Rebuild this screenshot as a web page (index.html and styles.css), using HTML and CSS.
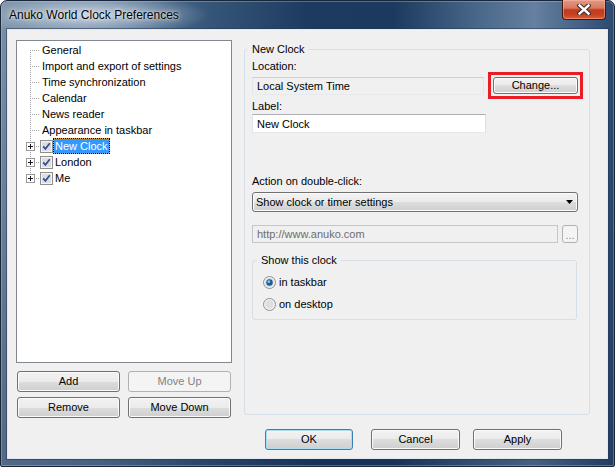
FILE: index.html
```html
<!DOCTYPE html>
<html>
<head>
<meta charset="utf-8">
<title>Anuko World Clock Preferences</title>
<link rel="stylesheet" href="styles.css">
</head>
<body>
<div class="window">
  <div class="titlebar">
    <span class="title">Anuko World Clock Preferences</span>
    <div class="close">
      <svg width="14" height="11" viewBox="0 0 14 11"><path d="M2.5 1.5L11.5 9.5M11.5 1.5L2.5 9.5" stroke="#3a2a28" stroke-width="4.4" stroke-linecap="square" fill="none"/><path d="M2.5 1.5L11.5 9.5M11.5 1.5L2.5 9.5" stroke="#ffffff" stroke-width="2.4" stroke-linecap="square" fill="none"/></svg>
    </div>
  </div>
  <div class="client">
    <div class="main">
      <div class="left">
        <div class="tree">
          <div class="row"><svg class="gut" width="23" height="16"><line class="dot" x1="13.5" y1="8" x2="13.5" y2="16"/><line class="dot" x1="15" y1="8.5" x2="23" y2="8.5"/></svg><span class="txt">General</span></div>
          <div class="row"><svg class="gut" width="23" height="16"><line class="dot" x1="13.5" y1="0" x2="13.5" y2="16"/><line class="dot" x1="15" y1="8.5" x2="23" y2="8.5"/></svg><span class="txt">Import and export of settings</span></div>
          <div class="row"><svg class="gut" width="23" height="16"><line class="dot" x1="13.5" y1="0" x2="13.5" y2="16"/><line class="dot" x1="15" y1="8.5" x2="23" y2="8.5"/></svg><span class="txt">Time synchronization</span></div>
          <div class="row"><svg class="gut" width="23" height="16"><line class="dot" x1="13.5" y1="0" x2="13.5" y2="16"/><line class="dot" x1="15" y1="8.5" x2="23" y2="8.5"/></svg><span class="txt">Calendar</span></div>
          <div class="row"><svg class="gut" width="23" height="16"><line class="dot" x1="13.5" y1="0" x2="13.5" y2="16"/><line class="dot" x1="15" y1="8.5" x2="23" y2="8.5"/></svg><span class="txt">News reader</span></div>
          <div class="row"><svg class="gut" width="23" height="16"><line class="dot" x1="13.5" y1="0" x2="13.5" y2="16"/><line class="dot" x1="15" y1="8.5" x2="23" y2="8.5"/></svg><span class="txt">Appearance in taskbar</span></div>
          <div class="row"><svg class="gut" width="23" height="16"><line class="dot" x1="13.5" y1="0" x2="13.5" y2="4"/><line class="dot" x1="13.5" y1="14" x2="13.5" y2="16"/><line class="dot" x1="19" y1="8.5" x2="23" y2="8.5"/><rect class="pbox" x="9.5" y="4.5" width="8" height="8"/><path class="plus" d="M11 8.5H16M13.5 6V11"/></svg><svg class="chk" width="13" height="13" viewBox="0 0 13 13"><rect x="0.5" y="0.5" width="12" height="12" fill="#f4f4f4" stroke="#8e8f8f"/><rect x="2" y="2" width="9" height="9" fill="#dcdee2"/><path d="M3.2 6.3L5.4 8.8L9.8 3.2" stroke="#3c4f8f" stroke-width="1.8" fill="none"/></svg><span class="txt sel">New Clock</span></div>
          <div class="row"><svg class="gut" width="23" height="16"><line class="dot" x1="13.5" y1="0" x2="13.5" y2="4"/><line class="dot" x1="13.5" y1="14" x2="13.5" y2="16"/><line class="dot" x1="19" y1="8.5" x2="23" y2="8.5"/><rect class="pbox" x="9.5" y="4.5" width="8" height="8"/><path class="plus" d="M11 8.5H16M13.5 6V11"/></svg><svg class="chk" width="13" height="13" viewBox="0 0 13 13"><rect x="0.5" y="0.5" width="12" height="12" fill="#f4f4f4" stroke="#8e8f8f"/><rect x="2" y="2" width="9" height="9" fill="#dcdee2"/><path d="M3.2 6.3L5.4 8.8L9.8 3.2" stroke="#3c4f8f" stroke-width="1.8" fill="none"/></svg><span class="txt">London</span></div>
          <div class="row"><svg class="gut" width="23" height="16"><line class="dot" x1="13.5" y1="0" x2="13.5" y2="4"/><line class="dot" x1="19" y1="8.5" x2="23" y2="8.5"/><rect class="pbox" x="9.5" y="4.5" width="8" height="8"/><path class="plus" d="M11 8.5H16M13.5 6V11"/></svg><svg class="chk" width="13" height="13" viewBox="0 0 13 13"><rect x="0.5" y="0.5" width="12" height="12" fill="#f4f4f4" stroke="#8e8f8f"/><rect x="2" y="2" width="9" height="9" fill="#dcdee2"/><path d="M3.2 6.3L5.4 8.8L9.8 3.2" stroke="#3c4f8f" stroke-width="1.8" fill="none"/></svg><span class="txt">Me</span></div>
        </div>
        <div class="btn-grid">
          <button class="btn">Add</button>
          <button class="btn" disabled>Move Up</button>
          <button class="btn">Remove</button>
          <button class="btn">Move Down</button>
        </div>
      </div>
      <div class="group outer">
        <span class="legend">New Clock</span>
        <div class="lbl">Location:</div>
        <div class="loc-row">
          <div class="field readonly">Local System Time</div>
          <div class="mark"><button class="btn small">Change...</button></div>
        </div>
        <div class="lbl">Label:</div>
        <div class="field label-field">New Clock</div>
        <div class="lbl lbl-action">Action on double-click:</div>
        <div class="combo"><span>Show clock or timer settings</span><svg width="7" height="4" viewBox="0 0 7 4"><path d="M0 0H7L3.5 4Z" fill="#000"/></svg></div>
        <div class="url-row">
          <div class="field disabled">http://www.anuko.com</div>
          <button class="btn dots" disabled>...</button>
        </div>
        <div class="group inner">
          <span class="legend legend-inner">Show this clock</span>
          <div class="radio r1"><svg width="13" height="13" viewBox="0 0 13 13"><circle cx="6.5" cy="6.5" r="6" fill="#f2f2f2" stroke="#8e8f8f"/><circle cx="6.5" cy="6.5" r="4.2" fill="#cfd3d8"/><circle cx="6.5" cy="6.5" r="3.2" fill="#1d5e96"/><circle cx="5.8" cy="5.7" r="1.4" fill="#7fc8f0"/></svg><span>in taskbar</span></div>
          <div class="radio r2"><svg width="13" height="13" viewBox="0 0 13 13"><circle cx="6.5" cy="6.5" r="6" fill="#f2f2f2" stroke="#8e8f8f"/><circle cx="6.5" cy="6.5" r="4.2" fill="#dcdfe3"/></svg><span>on desktop</span></div>
        </div>
      </div>
    </div>
    <div class="footer">
      <button class="btn default">OK</button>
      <button class="btn cancel">Cancel</button>
      <button class="btn">Apply</button>
    </div>
  </div>
</div>
</body>
</html>
```

FILE: styles.css
```css
* { box-sizing: border-box; }
html, body { margin: 0; padding: 0; }
body {
  width: 615px;
  height: 467px;
  overflow: hidden;
  background: #ffffff;
  font-family: "Liberation Sans", Arial, sans-serif;
  font-size: 11px;
  color: #000;
}

.window {
  width: 615px;
  height: 467px;
  border: 1px solid #17263a;
  border-radius: 7px 7px 2px 2px;
  padding: 0 6px 7px 6px;
  display: flex;
  flex-direction: column;
  background:
    radial-gradient(ellipse 120px 22px at 88px 14px, rgba(214,223,232,0.85), rgba(214,223,232,0)),
    linear-gradient(to bottom, rgba(10,25,50,0) 0px, rgba(10,25,50,0) 40px, rgba(15,35,70,0.35) 100%),
    linear-gradient(to right, #778da4 0%, #6781a0 16%, #355679 34%, #1d3b60 50%, #1c3a5f 64%, #4a6889 78%, #6580a0 87%, #2b4a70 100%);
  box-shadow: inset 0 0 0 1px rgba(190,210,230,0.35);
}

.titlebar {
  height: 28px;
  display: flex;
  align-items: flex-start;
}
.title {
  margin: 7px 0 0 2px;
  font-size: 12px;
  line-height: 14px;
  color: #000;
  text-shadow: 0 0 5px rgba(255,255,255,0.9), 0 0 2px rgba(255,255,255,0.6);
  white-space: nowrap;
}
.close {
  margin-left: auto;
  margin-right: 2px;
  width: 44px;
  height: 20px;
  margin-top: -1px;
  border: 1px solid #47170f;
  border-top: none;
  border-radius: 0 0 4px 4px;
  background: linear-gradient(to bottom, #e39a86 0%, #d7785f 42%, #c23b1e 52%, #c2401f 75%, #dc5d3b 100%);
  box-shadow: inset 0 0 0 1px rgba(255,190,170,0.45);
  display: flex;
  align-items: center;
  justify-content: center;
}

.client {
  flex: 1;
  background: #f0f0f0;
  border: 1px solid #e2e8ef;
  box-shadow: 0 0 0 1px rgba(35,55,85,0.55);
  display: flex;
  flex-direction: column;
}

.main {
  display: flex;
  height: 388px;
  padding: 10px 0 0 8px;
}
.left {
  width: 216px;
  display: flex;
  flex-direction: column;
}
.tree {
  height: 323px;
  border: 1px solid #828790;
  background: #fff;
  padding-top: 1px;
}
.row {
  display: flex;
  align-items: center;
  height: 16px;
}
.gut { flex: none; display: block; }
.dot {
  stroke: #a0a0a0;
  stroke-width: 1;
  stroke-dasharray: 1 1;
  fill: none;
  shape-rendering: crispEdges;
}
.pbox { fill: #fff; stroke: #989898; shape-rendering: crispEdges; }
.plus { stroke: #1a1a1a; stroke-width: 1; fill: none; shape-rendering: crispEdges; }
.chk { flex: none; display: block; }
.txt {
  border: 1px solid transparent;
  padding: 0 1px;
  line-height: 14px;
  white-space: nowrap;
}
.txt.sel {
  border: 1px dotted #000;
  background: linear-gradient(#3399ff, #3399ff) padding-box, linear-gradient(#e2a43a, #e2a43a) border-box;
  color: #fff;
}

.btn {
  font-family: "Liberation Sans", Arial, sans-serif;
  font-size: 11px;
  color: #000;
  margin: 0;
  padding: 0;
  height: 21px;
  border: 1px solid #707070;
  border-radius: 3px;
  background: linear-gradient(to bottom, #f2f2f2 0%, #ebebeb 50%, #dddddd 50%, #cfcfcf 100%);
  box-shadow: inset 0 0 0 1px #fbfbfb;
  text-align: center;
  line-height: 19px;
}
.btn:disabled {
  border-color: #adb2b5;
  background: #f4f4f4;
  color: #838383;
  box-shadow: none;
}
.btn.default {
  border-color: #3c7fb1;
  box-shadow: inset 0 0 0 1px #a9def6;
}

.btn-grid {
  display: grid;
  grid-template-columns: 103px 103px;
  grid-auto-rows: 21px;
  column-gap: 8px;
  row-gap: 5px;
  margin: 8px 0 0 1px;
}

.group {
  border: 1px solid #d5dfe5;
  border-radius: 3px;
  display: flex;
  flex-direction: column;
  align-items: flex-start;
}
.group.outer {
  width: 346px;
  height: 366px;
  margin: 9px 0 0 12px;
  padding-left: 7px;
}
.legend {
  margin: -7px 0 0 -5px;
  padding: 0 4px 0 5px;
  background: #f0f0f0;
  line-height: 13px;
  white-space: nowrap;
}
.lbl {
  line-height: 13px;
  margin-top: 4px;
}
.lbl-action { margin-top: 42px; }

.loc-row {
  display: flex;
  align-items: center;
  height: 21px;
  margin-top: 2px;
}
.field {
  display: flex;
  align-items: center;
  padding: 0 4px;
  border: 1px solid;
  border-color: #abadb3 #dbdfe6 #e3e9ef #e2e3ea;
  background: #fff;
  white-space: nowrap;
  overflow: hidden;
}
.field.readonly {
  width: 232px;
  height: 18px;
  background: #f0f0f0;
  border-color: #cdd0d5 #e1e4e8 #e6e9ed #e3e5e9;
}
.mark {
  border: 3px solid #ec1c24;
  padding: 2px;
  margin: -3px 0 -3px 4px;
  display: flex;
}
.btn.small {
  width: 85px;
  height: 17px;
  line-height: 15px;
}
.label-field {
  width: 234px;
  height: 19px;
  margin-top: 1px;
}

.combo {
  width: 326px;
  height: 20px;
  margin-top: 4px;
  border: 1px solid #707070;
  border-radius: 3px;
  background: linear-gradient(to bottom, #f2f2f2 0%, #ebebeb 50%, #dddddd 50%, #cfcfcf 100%);
  box-shadow: inset 0 0 0 1px #fbfbfb;
  display: flex;
  align-items: center;
  justify-content: space-between;
  padding: 0 4px 0 3px;
}
.combo svg { display: block; }

.url-row {
  display: flex;
  gap: 4px;
  height: 18px;
  margin-top: 13px;
}
.field.disabled {
  width: 306px;
  height: 18px;
  background: #f0f0f0;
  border-color: #c4c6ca;
  color: #6d6d6d;
}
.btn.dots {
  width: 16px;
  height: 18px;
  line-height: 18px;
  color: #8a8a8a;
}

.group.inner {
  width: 325px;
  height: 60px;
  margin-top: 17px;
  padding-left: 10px;
}
.legend-inner {
  margin-left: -6px;
  padding: 0 4px 0 4px;
}
.radio {
  display: flex;
  align-items: center;
  height: 16px;
  gap: 3px;
}
.radio svg { display: block; flex: none; }
.r1 { margin-top: 7px; }
.r2 { margin-top: 6px; }

.footer {
  display: flex;
  margin: 11px 0 0 257px;
}
.footer .btn { width: 89px; }
.footer .btn.default { width: 88px; margin-right: 18px; }
.footer .btn.cancel { margin-right: 13px; }
```
